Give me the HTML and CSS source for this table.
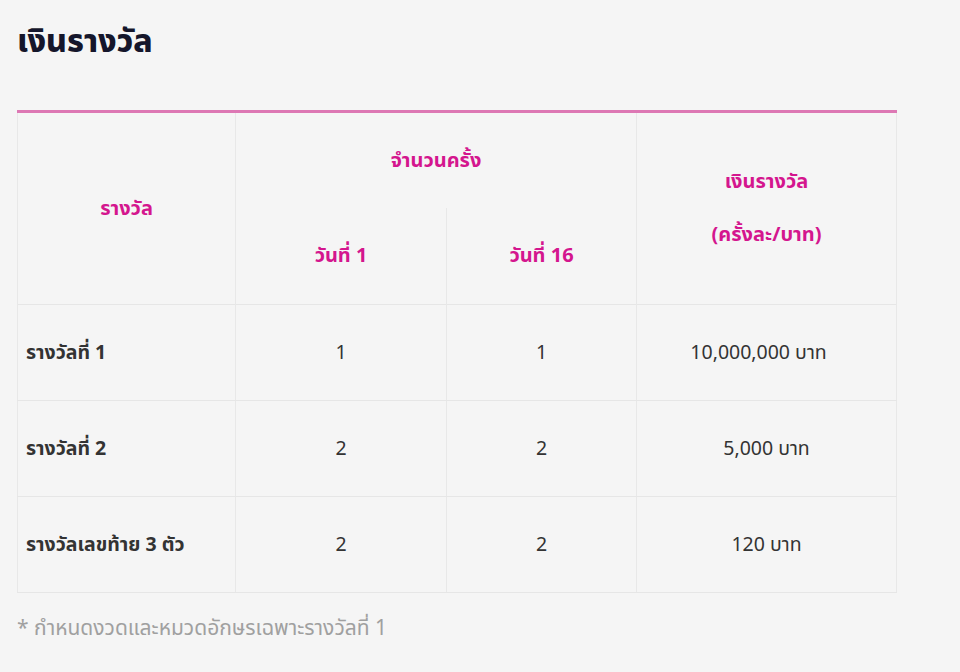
FILE: index.html
```html
<!DOCTYPE html>
<html lang="th">
<head>
<meta charset="utf-8">
<link rel="stylesheet" href="styles.css">
</head>
<body>
<main class="page">
  <h2 class="title">เงินรางวัล</h2>
  <table class="prize">
    <colgroup>
      <col class="c1"><col class="c2"><col class="c3"><col class="c4">
    </colgroup>
    <thead>
      <tr>
        <th rowspan="2">รางวัล</th>
        <th colspan="2" class="group">จำนวนครั้ง</th>
        <th rowspan="2"><div class="two"><span>เงินรางวัล</span><span>(ครั้งละ/บาท)</span></div></th>
      </tr>
      <tr>
        <th class="sub">วันที่ 1</th>
        <th class="sub">วันที่ 16</th>
      </tr>
    </thead>
    <tbody>
      <tr><td class="label">รางวัลที่ 1</td><td>1</td><td>1</td><td class="wide">10,000,000 บาท</td></tr>
      <tr><td class="label">รางวัลที่ 2</td><td>2</td><td>2</td><td>5,000 บาท</td></tr>
      <tr><td class="label">รางวัลเลขท้าย 3 ตัว</td><td>2</td><td>2</td><td>120 บาท</td></tr>
    </tbody>
  </table>
  <p class="note">* กำหนดงวดและหมวดอักษรเฉพาะรางวัลที่ 1</p>
</main>
</body>
</html>
```

FILE: styles.css
```css
html, body {
  margin: 0;
  background: #f5f5f5;
}
body {
  font-family: "Noto Sans Thai", "Noto Sans", "Liberation Sans", sans-serif;
  color: #333;
}
.page {
  padding: 20px 64px 0 17px;
}
.title {
  margin: 0;
  font-size: 32px;
  line-height: 44px;
  font-weight: 800;
  color: #15162b;
}
.prize {
  margin-top: 46px;
  width: 879px;
  border-collapse: collapse;
  table-layout: fixed;
  border-top: 3px solid #dd78b4;
}
.c1 { width: 218px; }
.c2 { width: 211px; }
.c3 { width: 190px; }
.c4 { width: 260px; }
.prize th, .prize td {
  border-left: 1px solid #e8e8e8;
  border-right: 1px solid #e8e8e8;
  text-align: center;
  vertical-align: middle;
  line-height: 26px;
  padding: 0 8px;
}
.prize th {
  color: #d4168e;
  font-weight: 700;
  font-size: 20px;
  height: 96px;
}
.prize .sub { height: 96px; }
.prize th.group { height: 95px; }
.two {
  display: flex;
  flex-direction: column;
  gap: 27px;
}
.prize td {
  height: 95px;
  border-top: 1px solid #e6e6e6;
  border-bottom: 1px solid #e6e6e6;
  font-size: 19.5px;
}
.prize td.wide {
  padding-right: 24px;
}
.prize td.label {
  text-align: left;
  font-weight: 700;
}
.note {
  margin: 20px 0 0;
  font-size: 21px;
  color: #a0a0a0;
}
```
